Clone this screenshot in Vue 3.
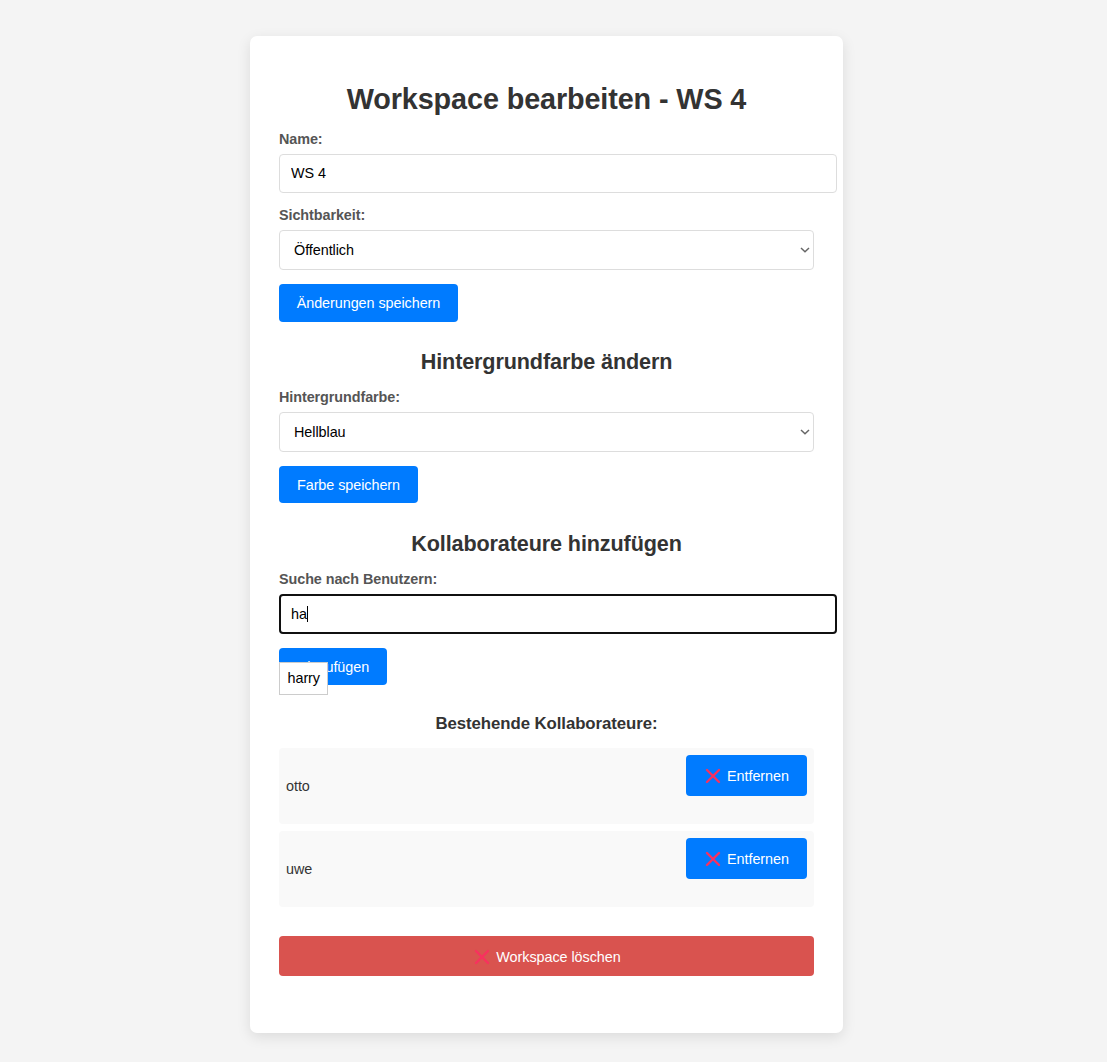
<script setup>
import { ref } from 'vue'

const name = ref('WS 4')
const query = ref('ha')
const suggestions = ref(['harry'])
const collaborators = ref(['otto', 'uwe'])
</script>

<template>
  <div class="page">
    <main class="card">
      <h1>Workspace bearbeiten - WS 4</h1>

      <form class="group" @submit.prevent>
        <label>Name:</label>
        <input v-model="name" class="field wide" type="text" />
        <label class="second">Sichtbarkeit:</label>
        <div class="field select">
          <span>Öffentlich</span>
          <svg width="10" height="6" viewBox="0 0 10 6"><path d="M1 1l4 3.7L9 1" /></svg>
        </div>
        <button class="btn save">Änderungen speichern</button>
      </form>

      <h2>Hintergrundfarbe ändern</h2>
      <form class="group" @submit.prevent>
        <label>Hintergrundfarbe:</label>
        <div class="field select">
          <span>Hellblau</span>
          <svg width="10" height="6" viewBox="0 0 10 6"><path d="M1 1l4 3.7L9 1" /></svg>
        </div>
        <button class="btn color">Farbe speichern</button>
      </form>

      <h2 class="h-add">Kollaborateure hinzufügen</h2>
      <form class="group" @submit.prevent>
        <label>Suche nach Benutzern:</label>
        <div class="field wide focused"><span>{{ query }}</span><i class="caret"></i></div>
        <div class="add-row">
          <button class="btn add">Hinzufügen</button>
          <ul class="suggestions">
            <li v-for="s in suggestions" :key="s">{{ s }}</li>
          </ul>
        </div>
      </form>

      <h3>Bestehende Kollaborateure:</h3>
      <ul class="people">
        <li v-for="c in collaborators" :key="c">
          <span>{{ c }}</span>
          <button class="btn remove">
            <svg class="cross" width="16" height="16" viewBox="0 0 16 16"><path d="M2 2l12 12M14 2L2 14" /></svg>
            <span>Entfernen</span>
          </button>
        </li>
      </ul>

      <button class="btn danger">
        <svg class="cross" width="16" height="16" viewBox="0 0 16 16"><path d="M2 2l12 12M14 2L2 14" /></svg>
        <span>Workspace löschen</span>
      </button>
    </main>
  </div>
</template>

<style>
body {
  background: #f4f4f4;
}
</style>

<style scoped>
* {
  box-sizing: border-box;
}
.page {
  min-height: 100vh;
  padding: 36px 0 29px 250px;
  background: #f4f4f4;
}
.card {
  display: flex;
  flex-direction: column;
  width: 593px;
  height: 997px;
  padding: 45px 29px 0;
  border-radius: 7px;
  background: #fff;
  box-shadow: 0 4px 14px rgba(0, 0, 0, 0.1);
  color: #333;
  font-family: Arial, "Liberation Sans", sans-serif;
  font-size: 14.4px;
  letter-spacing: -0.06px;
}
h1,
h2,
h3 {
  margin: 0;
  text-align: center;
  font-weight: bold;
}
h1 {
  height: 49px;
  font-size: 28.8px;
  line-height: 36px;
  letter-spacing: -0.12px;
}
h2 {
  height: 39px;
  margin-top: 27px;
  font-size: 21.6px;
  line-height: 26px;
  letter-spacing: -0.12px;
}
.h-add {
  margin-top: 28px;
}
h3 {
  height: 35px;
  margin-top: 28px;
  font-size: 16.8px;
  line-height: 21px;
  letter-spacing: -0.07px;
}
.group {
  display: flex;
  flex-direction: column;
  align-items: flex-start;
}
label {
  height: 24px;
  line-height: 18px;
  color: #555;
  font-weight: bold;
  letter-spacing: -0.08px;
}
.second {
  margin-top: 13px;
}
.field {
  display: flex;
  align-items: center;
  width: 535px;
  height: 40px;
  border: 1px solid #ddd;
  border-radius: 4px;
  background: #fff;
  color: #000;
  font: inherit;
  letter-spacing: inherit;
}
.wide {
  width: 558px;
  height: 39px;
  padding: 0 11px 2px;
}
.select {
  justify-content: space-between;
  padding: 0 3px 0 14px;
}
.select path {
  fill: none;
  stroke: #666;
  stroke-width: 1.5;
}
.focused {
  height: 40px;
  padding: 0 10px;
  border: 2px solid #101010;
}
.caret {
  width: 1px;
  height: 16px;
  background: #000;
}
.btn {
  display: flex;
  align-items: center;
  justify-content: center;
  height: 37px;
  margin-top: 14px;
  padding: 0;
  border: 0;
  border-radius: 4px;
  background: #007bff;
  color: #fff;
  font: inherit;
  letter-spacing: inherit;
  white-space: nowrap;
}
.save {
  width: 179px;
  height: 38px;
}
.color {
  width: 139px;
}
.add {
  width: 108px;
}
.add-row {
  position: relative;
}
.suggestions {
  position: absolute;
  top: 28px;
  left: 0;
  margin: 0;
  padding: 0;
  border: 1px solid #ccc;
  background: #fff;
  color: #000;
  list-style: none;
}
.suggestions li {
  width: 47px;
  height: 31px;
  padding-left: 7.5px;
  line-height: 31px;
}
.people {
  display: flex;
  flex-direction: column;
  gap: 7px;
  margin: 0;
  padding: 0;
  list-style: none;
}
.people li {
  display: flex;
  align-items: center;
  justify-content: space-between;
  height: 76px;
  padding: 0 7px;
  border-radius: 4px;
  background: #f9f9f9;
}
.remove {
  align-self: flex-start;
  gap: 6px;
  width: 121px;
  height: 41px;
  margin-top: 7px;
  padding-left: 1px;
}
.cross {
  flex: none;
}
.cross path {
  fill: none;
  stroke: #f8315f;
  stroke-width: 2.4;
  stroke-linecap: round;
}
.danger {
  gap: 6px;
  height: 40px;
  margin-top: 29px;
  padding: 2px 0 0 2px;
  background: #d9534f;
}
</style>
